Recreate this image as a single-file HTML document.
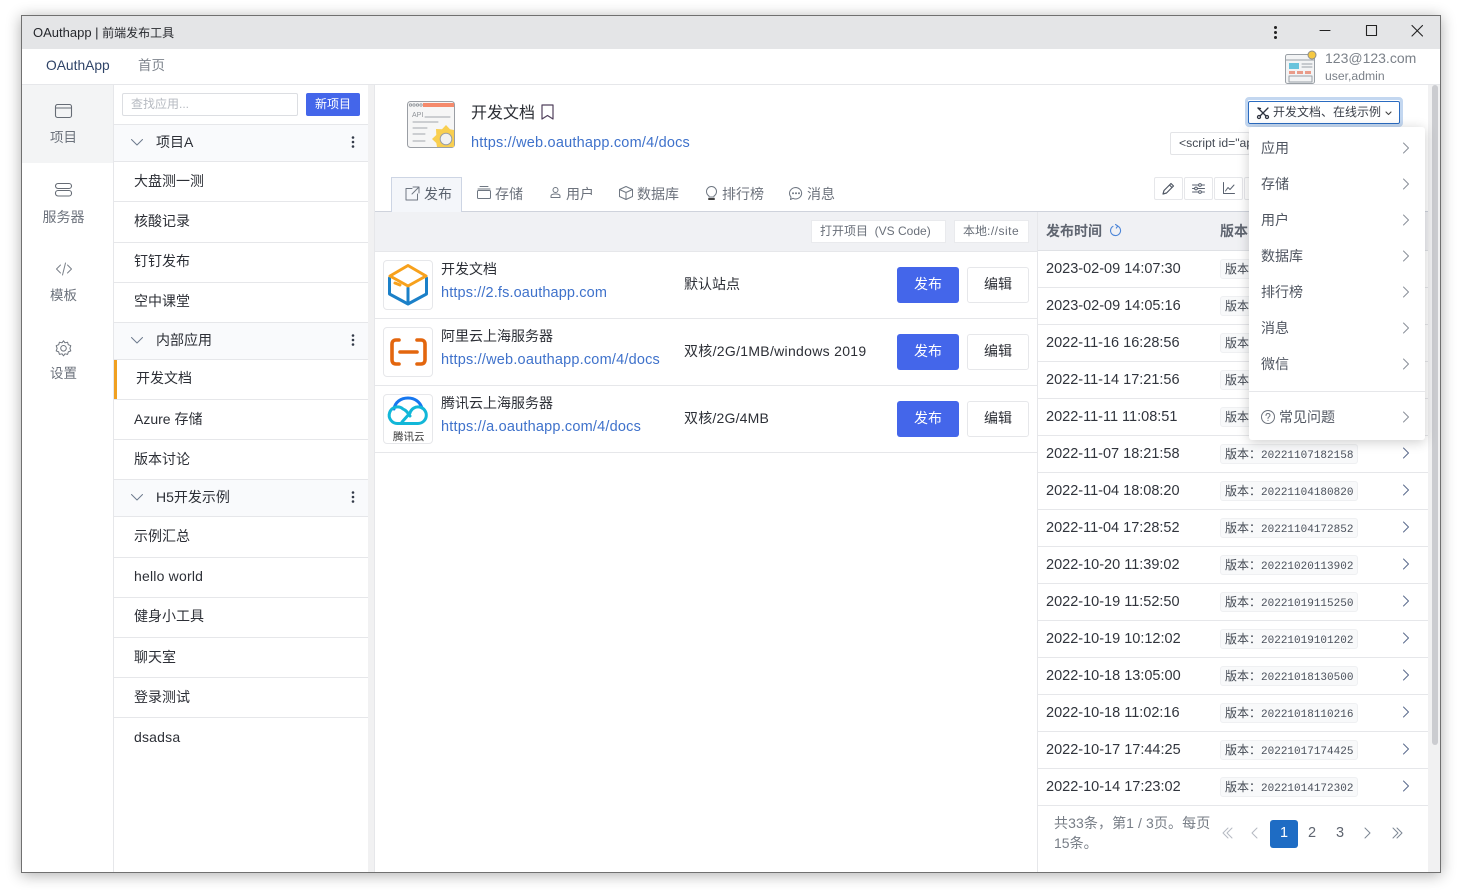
<!DOCTYPE html>
<html><head><meta charset="utf-8"><title>OAuthapp</title>
<style>
html,body{margin:0;padding:0;width:1472px;height:890px;overflow:hidden;background:#fff}
body{font-family:"Liberation Sans","Noto Sans CJK SC",sans-serif;font-size:14px;color:#2c2f36;position:relative}
.a,.t{position:absolute;box-sizing:border-box}
.t{white-space:nowrap;line-height:20px;height:20px}
#w{position:absolute;left:21px;top:15px;width:1420px;height:858px;border:1px solid #707070;box-shadow:0 2px 14px rgba(0,0,0,.32);background:#fff;box-sizing:border-box}
.l{position:absolute;background:#e6e7ea;height:1px}
.g{color:#6c727c}.b{color:#3a6fc4}
svg{position:absolute;overflow:visible;fill:none;stroke-linecap:round;stroke-linejoin:round}
.btn{position:absolute;box-sizing:border-box;text-align:center;border-radius:3px}
.pub{width:62px;height:36px;left:897px;background:#4466ea;color:#fff;line-height:35px}
.ed{width:62px;height:36px;left:967px;background:#fff;border:1px solid #e6e7ea;line-height:33px}
.ic{position:absolute;left:383px;width:50px;height:50px;border:1px solid #e6e7ea;border-radius:4px;background:#fff;box-sizing:border-box}
.lk{color:#3f72cb;font-size:14.5px;letter-spacing:.2px}
.tm{left:1046px;font-size:14.5px;color:#30343c}
.vr{position:absolute;left:1220px;width:138px;height:20px;background:#f8f9fa;border:1px solid #eff0f2;border-radius:3px;box-sizing:border-box;font-size:12px;line-height:18px;padding-left:4px;color:#444a54;white-space:nowrap}
.vr b{font:normal 11px "Liberation Mono",monospace;color:#4a505b}
.tbbtn{position:absolute;top:177px;width:29px;height:23px;border:1px solid #e6e7ea;border-radius:2px;box-sizing:border-box;background:#fff}
.mi{left:1261px;color:#4f5560}
</style></head><body>
<div id="w"></div>
<div class="a" style="left:22px;top:16px;width:1418px;height:33px;background:#e4e5e7"></div>
<div class="t" style="left:33px;top:23px;font-size:12px;color:#26282d"><span style="font-size:13px">OAuthapp | </span>前端发布工具</div>
<svg style="left:1270px;top:24px" width="10" height="16"><circle cx="5.500" cy="3.500" r="1.500" fill="#222"/><circle cx="5.500" cy="8.500" r="1.500" fill="#222"/><circle cx="5.500" cy="13.500" r="1.500" fill="#222"/></svg>
<svg style="left:1320px;top:25px" width="110" height="12" stroke="#222" stroke-width="1.100"><path d="M0 5.500H10"/><path d="M46.500 .5H56.500V10.500H46.500Z"/><path d="M92 .5L102.500 11M102.500 .5L92 11"/></svg>

<div class="t" style="left:46px;top:56px;font-size:13.800px;color:#2f4468">OAuthApp</div>
<div class="t g" style="left:138px;top:56px;font-size:13.500px;color:#7d838c">首页</div>
<svg style="left:1285px;top:51px" width="33" height="33"><rect x=".5" y="3.500" width="29" height="29" rx="2" fill="#f3f4f5" stroke="#9aa0a6"/><path d="M1 9H29" stroke="#9aa0a6"/><rect x="4" y="12" width="10" height="6" fill="#68c3dc"/><path d="M17 13H27M17 16H27" stroke="#9aa0a6"/><rect x="4" y="20" width="6" height="3" fill="#ea9c8a"/><rect x="12" y="20" width="6" height="3" fill="#ea9c8a"/><rect x="20" y="20" width="6" height="3" fill="#ea9c8a"/><rect x="4" y="25" width="23" height="6" stroke="#9aa0a6"/><circle cx="27" cy="4" r="4" fill="#f5c842" stroke="#8d8d8d"/></svg>
<div class="t" style="left:1325px;top:48px;font-size:14px;color:#7b8189">123@123.com</div>
<div class="t" style="left:1325px;top:66px;font-size:12.200px;color:#7b8189">user,admin</div>
<div class="l" style="left:22px;top:84px;width:1418px"></div>

<!-- left rail -->
<div class="a" style="left:22px;top:85px;width:91px;height:78px;background:#f3f4f5"></div>
<div class="a" style="left:113px;top:85px;width:1px;height:787px;background:#e6e7ea"></div>
<svg style="left:55px;top:104px" width="17" height="15" stroke="#666c75" stroke-width="1.100"><rect x=".5" y=".5" width="16" height="13" rx="2"/><path d="M1 4H16"/></svg>
<div class="t g" style="left:50px;top:128px;font-size:13.500px">项目</div>
<svg style="left:55px;top:183px" width="17" height="15" stroke="#666c75" stroke-width="1.100"><rect x=".5" y=".5" width="16" height="5" rx="2.500"/><rect x=".5" y="7.500" width="16" height="5.500" rx="2.500"/></svg>
<div class="t g" style="left:42.500px;top:207px;font-size:14px">服务器</div>
<svg style="left:56px;top:262px" width="16" height="14" stroke="#7a8089" stroke-width="1"><path d="M4.500 3L.5 7L4.500 11M11.500 3L15.500 7L11.500 11M9.500 1L6.500 13"/></svg>
<div class="t g" style="left:50px;top:286px;font-size:13.500px">模板</div>
<svg style="left:55px;top:340px" width="17" height="17" stroke="#6f757e" stroke-width="1"><path d="M8.500 .8L10 2.800L12.600 2.200L13.300 4.700L15.800 5.700L14.900 8.300L15.800 10.900L13.300 11.900L12.600 14.400L10 13.800L8.500 15.800L7 13.800L4.400 14.400L3.700 11.900L1.200 10.900L2.100 8.300L1.200 5.700L3.700 4.700L4.400 2.200L7 2.800Z"/><circle cx="8.500" cy="8.300" r="2.800"/></svg>
<div class="t g" style="left:50px;top:364px;font-size:13.500px">设置</div>

<!-- list -->
<div class="a" style="left:122px;top:93px;width:176px;height:23px;border:1px solid #dcdee2;border-radius:2px"></div>
<div class="t" style="left:131px;top:94px;font-size:12px;color:#b6bac1">查找应用...</div>
<div class="a" style="left:306px;top:93px;width:54px;height:23px;background:#4466ea;border-radius:2px;color:#fff;font-size:12px;line-height:22px;text-align:center">新项目</div>

<div class="a" style="left:114px;top:125px;width:254px;height:36px;background:#f9fafc"></div>
<div class="a" style="left:114px;top:323px;width:254px;height:36px;background:#f9fafc"></div>
<div class="a" style="left:114px;top:480px;width:254px;height:36px;background:#f9fafc"></div>
<div class="l" style="left:114px;top:124px;width:254px"></div>
<div class="l" style="left:114px;top:161px;width:254px"></div>
<div class="l" style="left:114px;top:201px;width:254px"></div>
<div class="l" style="left:114px;top:242px;width:254px"></div>
<div class="l" style="left:114px;top:282px;width:254px"></div>
<div class="l" style="left:114px;top:322px;width:254px"></div>
<div class="l" style="left:114px;top:359px;width:254px"></div>
<div class="l" style="left:114px;top:399px;width:254px"></div>
<div class="l" style="left:114px;top:439px;width:254px"></div>
<div class="l" style="left:114px;top:479px;width:254px"></div>
<div class="l" style="left:114px;top:516px;width:254px"></div>
<div class="l" style="left:114px;top:557px;width:254px"></div>
<div class="l" style="left:114px;top:597px;width:254px"></div>
<div class="l" style="left:114px;top:637px;width:254px"></div>
<div class="l" style="left:114px;top:677px;width:254px"></div>
<div class="l" style="left:114px;top:717px;width:254px"></div>
<div class="a" style="left:114px;top:360px;width:3px;height:39px;background:#f0a020"></div>

<svg style="left:131px;top:139px" width="12" height="7" stroke="#6c7a8c"><path d="M.5 .5L6 6L11.500 .5"/></svg>
<svg style="left:131px;top:337px" width="12" height="7" stroke="#6c7a8c"><path d="M.5 .5L6 6L11.500 .5"/></svg>
<svg style="left:131px;top:494px" width="12" height="7" stroke="#6c7a8c"><path d="M.5 .5L6 6L11.500 .5"/></svg>
<svg style="left:351px;top:136px" width="4" height="12"><circle cx="2" cy="1.500" r="1.300" fill="#333a48"/><circle cx="2" cy="6" r="1.300" fill="#333a48"/><circle cx="2" cy="10.500" r="1.300" fill="#333a48"/></svg>
<svg style="left:351px;top:334px" width="4" height="12"><circle cx="2" cy="1.500" r="1.300" fill="#333a48"/><circle cx="2" cy="6" r="1.300" fill="#333a48"/><circle cx="2" cy="10.500" r="1.300" fill="#333a48"/></svg>
<svg style="left:351px;top:491px" width="4" height="12"><circle cx="2" cy="1.500" r="1.300" fill="#333a48"/><circle cx="2" cy="6" r="1.300" fill="#333a48"/><circle cx="2" cy="10.500" r="1.300" fill="#333a48"/></svg>

<div class="t" style="left:156px;top:132px">项目A</div>
<div class="t" style="left:134px;top:171px">大盘测一测</div>
<div class="t" style="left:134px;top:211px">核酸记录</div>
<div class="t" style="left:134px;top:251px">钉钉发布</div>
<div class="t" style="left:134px;top:291px">空中课堂</div>
<div class="t" style="left:156px;top:330px">内部应用</div>
<div class="t" style="left:136px;top:368px">开发文档</div>
<div class="t" style="left:134px;top:409px">Azure 存储</div>
<div class="t" style="left:134px;top:449px">版本讨论</div>
<div class="t" style="left:156px;top:487px">H5开发示例</div>
<div class="t" style="left:134px;top:526px">示例汇总</div>
<div class="t" style="left:134px;top:566px;letter-spacing:.2px">hello world</div>
<div class="t" style="left:134px;top:606px">健身小工具</div>
<div class="t" style="left:134px;top:647px">聊天室</div>
<div class="t" style="left:134px;top:687px">登录测试</div>
<div class="t" style="left:134px;top:727px;letter-spacing:.2px">dsadsa</div>

<!-- gutter -->
<div class="a" style="left:368px;top:85px;width:6px;height:787px;background:#f1f1f2"></div>
<div class="a" style="left:374px;top:85px;width:1px;height:787px;background:#e6e7ea"></div>
<div class="a" style="left:1428px;top:85px;width:12px;height:787px;background:#f1f1f2"></div>
<div class="a" style="left:1432px;top:85px;width:6px;height:660px;background:#cbccd0;border-radius:3px"></div>

<!-- header -->
<svg style="left:407px;top:101px" width="48" height="48"><rect x=".5" y=".5" width="47" height="46" rx="3" fill="#f6f6f6" stroke="#9a9ea4"/><rect x="16" y="2" width="31" height="4" fill="#f58a6c"/><circle cx="3.500" cy="4" r="1.200" stroke="#8f9398" stroke-width=".8"/><circle cx="7" cy="4" r="1.200" stroke="#8f9398" stroke-width=".8"/><circle cx="10.500" cy="4" r="1.200" stroke="#8f9398" stroke-width=".8"/><circle cx="14" cy="4" r="1.200" stroke="#8f9398" stroke-width=".8"/><path d="M18 16H43M6 21H31M6 27H20M6 33H18M6 40H18" stroke="#a3a7ac"/><text x="5" y="16" font-family="Liberation Sans" font-size="7" fill="#8f9398">API</text><path d="M39 24L35 28.300L29 28L29.300 34L25 38L29.300 42L30 46H47V29L43 28.300Z" fill="#f9cf50"/><circle cx="39" cy="38" r="5.800" fill="#f2f2f2" stroke="#9a9ea4"/></svg>
<div class="t" style="left:471px;top:104px;font-size:16px;color:#2b2e34">开发文档</div>
<svg style="left:541px;top:104px" width="13" height="17" stroke="#50405c" stroke-width="1.200"><path d="M1 1H12V15L6.500 11.500L1 15Z"/></svg>
<div class="t lk" style="left:471px;top:133px">https://web.oauthapp.com/4/docs</div>

<div class="a" style="left:1170px;top:132px;width:80px;height:23px;border:1px solid #e3e4e7;border-radius:2px;font-size:12.200px;line-height:21px;padding-left:8px;overflow:hidden;white-space:nowrap;color:#444a54">&lt;script id="ap</div>
<div class="a" style="left:1245px;top:97px;width:158px;height:30px;border:3px solid #c3d7f0;border-radius:4px;background:#fff"></div>
<div class="a" style="left:1248px;top:101px;width:152px;height:23px;border:1px solid #2a6bc0;border-radius:2px;background:#fff"></div>
<svg style="left:1257px;top:107px" width="12" height="12" stroke="#2f3440" stroke-width="1.300"><path d="M1 1L9 9M11 1L3 9"/><circle cx="10" cy="10" r="1.500"/><circle cx="2" cy="10" r="1.500"/><path d="M1 1L3.500 1.500"/></svg>
<div class="t" style="left:1273px;top:102px;font-size:12px;color:#3a3f49">开发文档、在线示例</div>
<svg style="left:1385px;top:111px" width="7" height="5" stroke="#444" stroke-width="1.100"><path d="M1 1L3.500 3.500L6 1"/></svg>

<!-- tabs -->
<div class="a" style="left:375px;top:211px;width:1053px;height:1px;background:#cfd3dc"></div>
<div class="a" style="left:391px;top:177px;width:71px;height:35px;background:#f4f6fa;border:1px solid #cdd5e4;border-bottom:0"></div>
<svg style="left:405px;top:186px" width="15" height="15" stroke="#6f7782"><path d="M7 2.500H1V14H12.500V8M8 1H14V7M14 1L7 8"/></svg>
<div class="t" style="left:424px;top:184px;color:#5a626e">发布</div>
<svg style="left:477px;top:186px" width="14" height="13" stroke="#6f7782"><path d="M3 .5H11M1 3H13"/><rect x=".5" y="4.500" width="13" height="8" rx="1"/></svg>
<div class="t g" style="left:495px;top:184px">存储</div>
<svg style="left:550px;top:187px" width="11" height="11" stroke="#6f7782"><circle cx="5.500" cy="3" r="2.500"/><path d="M1 10.500V9C1 7.500 2.500 7 5.500 7C8.500 7 10 7.500 10 9V10.500Z"/></svg>
<div class="t g" style="left:566px;top:184px">用户</div>
<svg style="left:619px;top:186px" width="14" height="14" stroke="#6f7782"><path d="M7 .5L13.500 3.500V10.500L7 13.500L.5 10.500V3.500ZM.5 3.500L7 6.500L13.500 3.500M7 6.500V13.500"/></svg>
<div class="t g" style="left:637px;top:184px">数据库</div>
<svg style="left:706px;top:186px" width="11" height="15" stroke="#6f7782"><path d="M3 10C1.500 9 .5 7.500 .5 5.500A5 5 0 0 1 10.500 5.500C10.500 7.500 9.500 9 8 10V11H3Z"/><path d="M3 13H8" stroke-width="2" stroke="#444"/></svg>
<div class="t g" style="left:722px;top:184px">排行榜</div>
<svg style="left:789px;top:187px" width="14" height="14" stroke="#6f7782"><path d="M7 .5A6.500 5.800 0 0 1 7 12C5.800 12 4.800 11.800 4 11.300L1.500 12.500L2 10C1 9 .5 7.700 .5 6.300A6.500 5.800 0 0 1 7 .5Z"/><circle cx="4" cy="6.300" r=".5" fill="#6f7782"/><circle cx="7" cy="6.300" r=".5" fill="#6f7782"/><circle cx="10" cy="6.300" r=".5" fill="#6f7782"/></svg>
<div class="t g" style="left:807px;top:184px">消息</div>

<div class="tbbtn" style="left:1154px"></div>
<div class="tbbtn" style="left:1184px"></div>
<div class="tbbtn" style="left:1214px"></div>
<div class="tbbtn" style="left:1244px"></div>
<svg style="left:1162px;top:182px" width="13" height="13" stroke="#4f5764" stroke-width="1.200"><path d="M1 12L2 8.500L9 1.500L11.500 4L4.500 11ZM7.500 3L10 5.500"/></svg>
<svg style="left:1192px;top:183px" width="13" height="11" stroke="#5a6270"><path d="M.5 2H12.500M.5 5.500H12.500M.5 9H12.500"/><circle cx="8" cy="2" r="1.400" fill="#fff"/><circle cx="4" cy="5.500" r="1.400" fill="#fff"/><circle cx="8" cy="9" r="1.400" fill="#fff"/></svg>
<svg style="left:1223px;top:182px" width="12" height="12" stroke="#5a6270"><path d="M.5 .5V11.500H11.500M2.500 9L5 5.500L7 7.500L11 3"/></svg>

<!-- toolbar band -->
<div class="a" style="left:375px;top:212px;width:662px;height:39px;background:#f0f1f4"></div>
<div class="a" style="left:375px;top:251px;width:662px;height:1px;background:#e6e7ea"></div>
<div class="a" style="left:1037px;top:212px;width:391px;height:38px;background:#f0f1f4"></div>
<div class="a" style="left:1037px;top:250px;width:391px;height:1px;background:#dfe1e5"></div>
<div class="a" style="left:1037px;top:212px;width:1px;height:660px;background:#e6e7ea"></div>
<div class="a" style="left:811px;top:220px;width:135px;height:23px;background:#fff;border:1px solid #e9eaed;font-size:12px;line-height:21px;padding-left:8px;color:#6a707a;white-space:nowrap">打开项目&nbsp;&nbsp;(VS Code)</div>
<div class="a" style="left:954px;top:220px;width:75px;height:23px;background:#fff;border:1px solid #e9eaed;font-size:12px;line-height:21px;padding-left:8px;color:#6a707a;white-space:nowrap;letter-spacing:.5px"><span style="letter-spacing:0">本地</span>://site</div>
<div class="t" style="left:1046px;top:221px;font-weight:bold;font-size:14px;color:#5f6570">发布时间</div>
<svg style="left:1110px;top:224px" width="11" height="12" stroke="#4d86d8" stroke-width="1.100"><path d="M7.500 2A5 5 0 1 1 3 2.300M5.500 .5L7.800 2L6.300 4"/></svg>
<div class="t" style="left:1220px;top:221px;font-weight:bold;font-size:14px;color:#5f6570">版本</div>

<!-- app rows -->
<div class="l" style="left:375px;top:318px;width:662px"></div>
<div class="l" style="left:375px;top:385px;width:662px"></div>
<div class="l" style="left:375px;top:452px;width:662px"></div>

<div class="ic" style="top:260px"></div>
<svg style="left:387px;top:264px" width="42" height="42" stroke-width="3"><path d="M2.500 14V30L21 40L39.500 30V14" stroke="#1b80c8"/><path d="M21 24V39" stroke="#1b80c8"/><path d="M21 1.500L39 12L21 22L3 12Z" stroke="#f7a11c"/><path d="M8 19L13 21" stroke="#f7a11c"/></svg>
<div class="t" style="left:441px;top:259px;font-size:14px">开发文档</div>
<div class="t lk" style="left:441px;top:283px;letter-spacing:.13px">https://2.fs.oauthapp.com</div>
<div class="t" style="left:684px;top:274px;font-size:14px">默认站点</div>
<div class="btn pub" style="top:267px">发布</div><div class="btn ed" style="top:267px">编辑</div>

<div class="ic" style="top:327px"></div>
<svg style="left:390px;top:338px" width="37" height="28" stroke="#e3660e" stroke-width="3.600"><path d="M9 2H6C3 2 2 4 2 6V22C2 24 3 26 6 26H9M27 2H31C34 2 35 4 35 6V22C35 24 34 26 31 26H27M10 14H27"/></svg>
<div class="t" style="left:441px;top:326px;font-size:14px">阿里云上海服务器</div>
<div class="t lk" style="left:441px;top:350px">https://web.oauthapp.com/4/docs</div>
<div class="t" style="left:684px;top:341px;letter-spacing:.3px">双核/2G/1MB/windows 2019</div>
<div class="btn pub" style="top:334px">发布</div><div class="btn ed" style="top:334px">编辑</div>

<div class="ic" style="top:394px"></div>
<svg style="left:388px;top:396px" width="40" height="30" stroke-width="3"><path d="M6 13C7 6 13 2 20 2C27 2 32 6 34 12" stroke="#1677f0"/><path d="M10 27.500H30A8.300 8.300 0 1 0 22 17L14 26" stroke="#12b7d8"/><path d="M10 27.500A8.300 8.300 0 1 1 15 13C18 14 20 17 22 20" stroke="#12b7d8"/></svg>
<div class="t" style="left:393px;top:429px;font-size:10.500px;line-height:16px;height:16px;color:#333">腾讯云</div>
<div class="t" style="left:441px;top:393px;font-size:14px">腾讯云上海服务器</div>
<div class="t lk" style="left:441px;top:417px">https://a.oauthapp.com/4/docs</div>
<div class="t" style="left:684px;top:408px;letter-spacing:.2px">双核/2G/4MB</div>
<div class="btn pub" style="top:401px">发布</div><div class="btn ed" style="top:401px">编辑</div>

<!-- versions -->
<div class="l" style="left:1038px;top:287px;width:390px"></div>
<div class="l" style="left:1038px;top:324px;width:390px"></div>
<div class="l" style="left:1038px;top:361px;width:390px"></div>
<div class="l" style="left:1038px;top:398px;width:390px"></div>
<div class="l" style="left:1038px;top:435px;width:390px"></div>
<div class="l" style="left:1038px;top:472px;width:390px"></div>
<div class="l" style="left:1038px;top:509px;width:390px"></div>
<div class="l" style="left:1038px;top:546px;width:390px"></div>
<div class="l" style="left:1038px;top:583px;width:390px"></div>
<div class="l" style="left:1038px;top:620px;width:390px"></div>
<div class="l" style="left:1038px;top:657px;width:390px"></div>
<div class="l" style="left:1038px;top:694px;width:390px"></div>
<div class="l" style="left:1038px;top:731px;width:390px"></div>
<div class="l" style="left:1038px;top:768px;width:390px"></div>
<div class="l" style="left:1038px;top:805px;width:390px"></div>

<div class="t tm" style="top:259px">2023-02-09 14:07:30</div>
<div class="t tm" style="top:296px">2023-02-09 14:05:16</div>
<div class="t tm" style="top:333px">2022-11-16 16:28:56</div>
<div class="t tm" style="top:370px">2022-11-14 17:21:56</div>
<div class="t tm" style="top:407px">2022-11-11 11:08:51</div>
<div class="t tm" style="top:444px">2022-11-07 18:21:58</div>
<div class="t tm" style="top:481px">2022-11-04 18:08:20</div>
<div class="t tm" style="top:518px">2022-11-04 17:28:52</div>
<div class="t tm" style="top:555px">2022-10-20 11:39:02</div>
<div class="t tm" style="top:592px">2022-10-19 11:52:50</div>
<div class="t tm" style="top:629px">2022-10-19 10:12:02</div>
<div class="t tm" style="top:666px">2022-10-18 13:05:00</div>
<div class="t tm" style="top:703px">2022-10-18 11:02:16</div>
<div class="t tm" style="top:740px">2022-10-17 17:44:25</div>
<div class="t tm" style="top:777px">2022-10-14 17:23:02</div>

<div class="vr" style="top:259px">版本：<b>20230209140730</b></div>
<div class="vr" style="top:296px">版本：<b>20230209140516</b></div>
<div class="vr" style="top:333px">版本：<b>20221116162856</b></div>
<div class="vr" style="top:370px">版本：<b>20221114172156</b></div>
<div class="vr" style="top:407px">版本：<b>20221111110851</b></div>
<div class="vr" style="top:444px">版本：<b>20221107182158</b></div>
<div class="vr" style="top:481px">版本：<b>20221104180820</b></div>
<div class="vr" style="top:518px">版本：<b>20221104172852</b></div>
<div class="vr" style="top:555px">版本：<b>20221020113902</b></div>
<div class="vr" style="top:592px">版本：<b>20221019115250</b></div>
<div class="vr" style="top:629px">版本：<b>20221019101202</b></div>
<div class="vr" style="top:666px">版本：<b>20221018130500</b></div>
<div class="vr" style="top:703px">版本：<b>20221018110216</b></div>
<div class="vr" style="top:740px">版本：<b>20221017174425</b></div>
<div class="vr" style="top:777px">版本：<b>20221014172302</b></div>

<svg style="left:1402px;top:447px" width="8" height="12" stroke="#5a6a8c"><path d="M1.500 1L6.500 6L1.500 11"/></svg>
<svg style="left:1402px;top:484px" width="8" height="12" stroke="#5a6a8c"><path d="M1.500 1L6.500 6L1.500 11"/></svg>
<svg style="left:1402px;top:521px" width="8" height="12" stroke="#5a6a8c"><path d="M1.500 1L6.500 6L1.500 11"/></svg>
<svg style="left:1402px;top:558px" width="8" height="12" stroke="#5a6a8c"><path d="M1.500 1L6.500 6L1.500 11"/></svg>
<svg style="left:1402px;top:595px" width="8" height="12" stroke="#5a6a8c"><path d="M1.500 1L6.500 6L1.500 11"/></svg>
<svg style="left:1402px;top:632px" width="8" height="12" stroke="#5a6a8c"><path d="M1.500 1L6.500 6L1.500 11"/></svg>
<svg style="left:1402px;top:669px" width="8" height="12" stroke="#5a6a8c"><path d="M1.500 1L6.500 6L1.500 11"/></svg>
<svg style="left:1402px;top:706px" width="8" height="12" stroke="#5a6a8c"><path d="M1.500 1L6.500 6L1.500 11"/></svg>
<svg style="left:1402px;top:743px" width="8" height="12" stroke="#5a6a8c"><path d="M1.500 1L6.500 6L1.500 11"/></svg>
<svg style="left:1402px;top:780px" width="8" height="12" stroke="#5a6a8c"><path d="M1.500 1L6.500 6L1.500 11"/></svg>

<!-- pagination -->
<div class="t" style="left:1054px;top:813px;font-size:14px;color:#777d86;letter-spacing:.1px">共33条，第1 / 3页。每页</div>
<div class="t" style="left:1054px;top:833px;font-size:14px;color:#777d86">15条。</div>
<svg style="left:1222px;top:827px" width="190" height="13" stroke="#b5bac2"><path d="M6 1L1 6L6 11M10 1L5 6L10 11M35 1L30 6L35 11"/><path d="M143 1L148 6L143 11M171 1L176 6L171 11M175 1L180 6L175 11" stroke="#7d8794"/></svg>
<div class="a" style="left:1270px;top:820px;width:28px;height:28px;background:#1e6cc4;border-radius:3px;color:#fff;text-align:center;line-height:27px;font-size:14.500px">1</div>
<div class="t" style="left:1308px;top:823px;font-size:14.500px;color:#5f6570">2</div>
<div class="t" style="left:1336px;top:823px;font-size:14.500px;color:#5f6570">3</div>

<!-- dropdown -->
<div class="a" style="left:1249px;top:127px;width:176px;height:313px;background:#fff;border-radius:3px;box-shadow:0 2px 12px rgba(0,0,0,.2)"></div>
<div class="t mi" style="top:138px">应用</div>
<div class="t mi" style="top:174px">存储</div>
<div class="t mi" style="top:210px">用户</div>
<div class="t mi" style="top:246px">数据库</div>
<div class="t mi" style="top:282px">排行榜</div>
<div class="t mi" style="top:318px">消息</div>
<div class="t mi" style="top:354px">微信</div>
<div class="l" style="left:1249px;top:391px;width:176px"></div>
<svg style="left:1261px;top:410px" width="14" height="14" stroke="#6c727c"><circle cx="7" cy="7" r="6.500"/><path d="M5 5.500C5 4 6 3.500 7 3.500C8.200 3.500 9 4.300 9 5.300C9 6.800 7 6.800 7 8.500M7 10.200V10.500"/></svg>
<div class="t mi" style="left:1279px;top:407px">常见问题</div>
<svg style="left:1402px;top:142px" width="8" height="12" stroke="#8a9099"><path d="M1.500 1L6.500 6L1.500 11"/></svg>
<svg style="left:1402px;top:178px" width="8" height="12" stroke="#8a9099"><path d="M1.500 1L6.500 6L1.500 11"/></svg>
<svg style="left:1402px;top:214px" width="8" height="12" stroke="#8a9099"><path d="M1.500 1L6.500 6L1.500 11"/></svg>
<svg style="left:1402px;top:250px" width="8" height="12" stroke="#8a9099"><path d="M1.500 1L6.500 6L1.500 11"/></svg>
<svg style="left:1402px;top:286px" width="8" height="12" stroke="#8a9099"><path d="M1.500 1L6.500 6L1.500 11"/></svg>
<svg style="left:1402px;top:322px" width="8" height="12" stroke="#8a9099"><path d="M1.500 1L6.500 6L1.500 11"/></svg>
<svg style="left:1402px;top:358px" width="8" height="12" stroke="#8a9099"><path d="M1.500 1L6.500 6L1.500 11"/></svg>
<svg style="left:1402px;top:411px" width="8" height="12" stroke="#8a9099"><path d="M1.500 1L6.500 6L1.500 11"/></svg>
</body></html>
